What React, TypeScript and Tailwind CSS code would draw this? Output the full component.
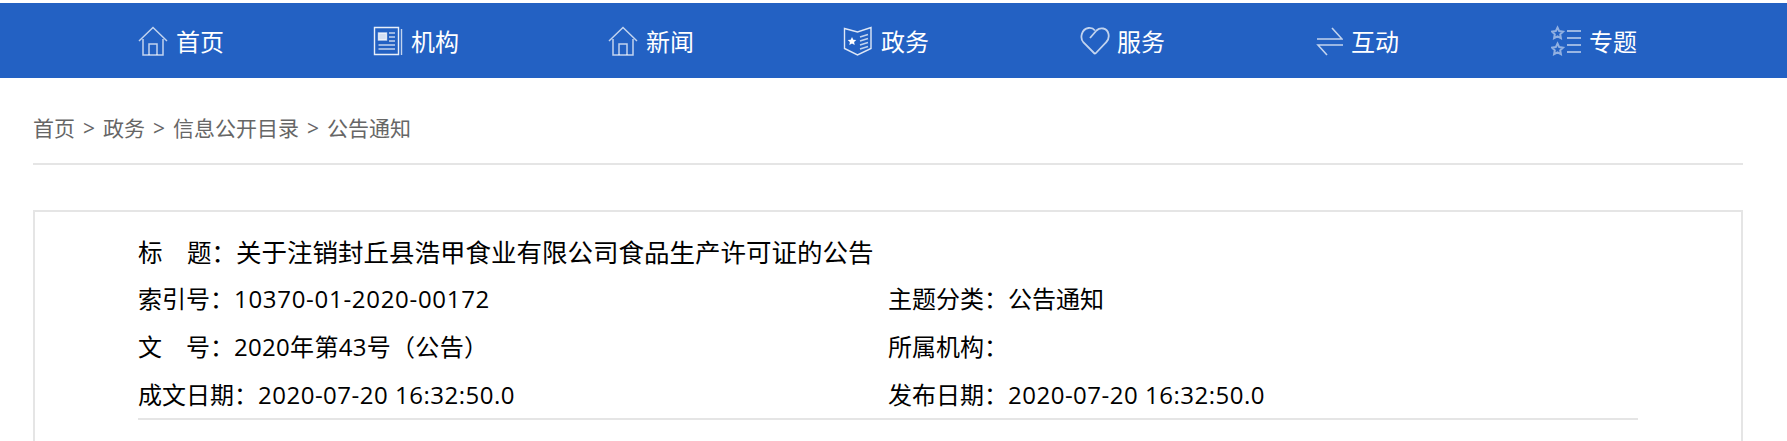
// 公告详情页：顶部导航 + 面包屑 + 公告元信息卡片
const NAV_STROKE = 'rgba(255,255,255,0.72)';

function IconHome() {
  return (
    <svg viewBox="0 0 30 30" className="h-[30px] w-[30px]" fill="none" stroke={NAV_STROKE} strokeWidth="1.5">
      <path d="M1 15 15 1.500 29 15" />
      <path d="M5 13v16h20V13" />
      <path d="M11 29V18h8v11" />
    </svg>
  );
}

function IconOrg() {
  return (
    <svg viewBox="0 0 30 30" className="h-[30px] w-[30px]" fill="none" stroke={NAV_STROKE} strokeWidth="1.400">
      <path d="M1.500 1.500h24v27h-24z" stroke="rgba(255,255,255,0.9)" />
      <path d="M28.500 3v26" />
      <path d="M5.500 7h8v7h-8z" fill="rgba(255,255,255,0.8)" />
      <path d="M16 7h6M16 11h6M16 15h6M5.500 19h16.500M5.500 23h16.500" />
    </svg>
  );
}

function IconGov() {
  return (
    <svg viewBox="0 0 30 30" className="h-[30px] w-[30px]" fill="none" stroke={NAV_STROKE} strokeWidth="1.400">
      <path d="M1.500 2.500 14.500 6 28 1.500v21L14.500 29 1.500 22.500z" stroke="rgba(255,255,255,0.85)" />
      <path d="m9 11 1.300 2.800 3 .3-2.200 2 .6 3L9 17.600 6.300 19.100l.6-3-2.200-2 3-.3z" fill="#fff" stroke="none" />
      <path d="m17 11 8-2.500M17 15l8-2.500M17 19l8-2.500M17 23l8-2.500" strokeWidth="1.600" />
    </svg>
  );
}

function IconHeart() {
  return (
    <svg viewBox="0 0 30 30" className="-mr-[1px] ml-[2px] h-[30px] w-[30px]" fill="none" stroke={NAV_STROKE} strokeWidth="1.800">
      <path d="M15 28 3.500 16.500C-.5 12 1.500 3 8.500 2c2.700-.3 5 .6 6.500 2.500" />
      <path d="M10 12 16.500 4.500C20 1 27 1.500 28.500 8c.7 3.500-.5 6.500-2.500 8.500L15 28" />
    </svg>
  );
}

function IconSwap() {
  return (
    <svg viewBox="0 0 30 30" className="h-[30px] w-[30px]" fill="none" stroke={NAV_STROKE} strokeWidth="1.600">
      <path d="M4 13h25L19 2" />
      <path d="M30 19H5l9 10" />
    </svg>
  );
}

function Star({ y }: { y: number }) {
  return (
    <path
      transform={`translate(0 ${y})`}
      d="m6.500 1.500 1.700 3.600 3.800.5-2.800 2.700.7 3.900-3.400-1.900-3.400 1.900.7-3.900L1 5.600l3.800-.5z"
    />
  );
}

function IconTopic() {
  return (
    <svg viewBox="0 0 30 32" className="ml-[3px] h-[32px] w-[30px]" fill="none" stroke="rgba(255,255,255,0.5)" strokeWidth="2">
      <Star y={1} />
      <Star y={17} />
      <path d="M16 6h14M16 13h14M16 20h14M16 27h14" stroke="rgba(255,255,255,0.72)" strokeWidth="1.600" />
    </svg>
  );
}

const navItems = [
  { label: '首页', icon: <IconHome /> },
  { label: '机构', icon: <IconOrg /> },
  { label: '新闻', icon: <IconHome /> },
  { label: '政务', icon: <IconGov /> },
  { label: '服务', icon: <IconHeart /> },
  { label: '互动', icon: <IconSwap /> },
  { label: '专题', icon: <IconTopic /> },
];

const crumbs = ['首页', '政务', '信息公开目录', '公告通知'];

const meta = [
  { label: '索引号：', value: '10370-01-2020-00172', track: 'tracking-[0.7px]' },
  { label: '主题分类：', value: '公告通知', track: '' },
  { label: '文　号：', value: '2020年第43号（公告）', track: 'tracking-[0.3px]' },
  { label: '所属机构：', value: '', track: '' },
  { label: '成文日期：', value: '2020-07-20 16:32:50.0', track: 'tracking-[0.5px]' },
  { label: '发布日期：', value: '2020-07-20 16:32:50.0', track: 'tracking-[0.5px]' },
];

export default function App() {
  return (
    <div className="h-[441px] overflow-hidden bg-white pt-[3px] font-['Open_Sans','Noto_Sans_CJK_SC',sans-serif]">
      <nav className="flex h-[75px] justify-center bg-[#2361c3] font-['Noto_Sans_CJK_SC',sans-serif] text-white">
        {navItems.map((item) => (
          <a key={item.label} className="flex w-[235px] items-center gap-2 pl-[67px] text-[24px]">
            {item.icon}
            <span>{item.label}</span>
          </a>
        ))}
      </nav>

      <div className="ml-[33px] mr-[44px] flex h-[87px] items-center gap-2 border-b-2 border-[#e5e5e5] pt-[16px] text-[21px] text-[#666666]">
        {crumbs.map((c, i) => (
          <span key={c} className="flex items-center gap-2">
            {i > 0 && <span>&gt;</span>}
            <span>{c}</span>
          </span>
        ))}
      </div>

      <div className="ml-[33px] mr-[44px] mt-[45px] h-[400px] border-2 border-[#e5e5e5] px-[103px] pt-[17px] text-black">
        <div className="h-[46px] text-[24.5px] leading-[46px]">
          标　题：<span className="text-[25.5px]">关于注销封丘县浩甲食业有限公司食品生产许可证的公告</span>
        </div>
        <div className="grid grid-cols-2 grid-rows-[48px_48px_47px] border-b-2 border-[#e5e5e5] text-[24px] leading-[48px]">
          {meta.map((row) => (
            <div key={row.label}>
              {row.label}
              <span className={row.track}>{row.value}</span>
            </div>
          ))}
        </div>
      </div>
    </div>
  );
}
